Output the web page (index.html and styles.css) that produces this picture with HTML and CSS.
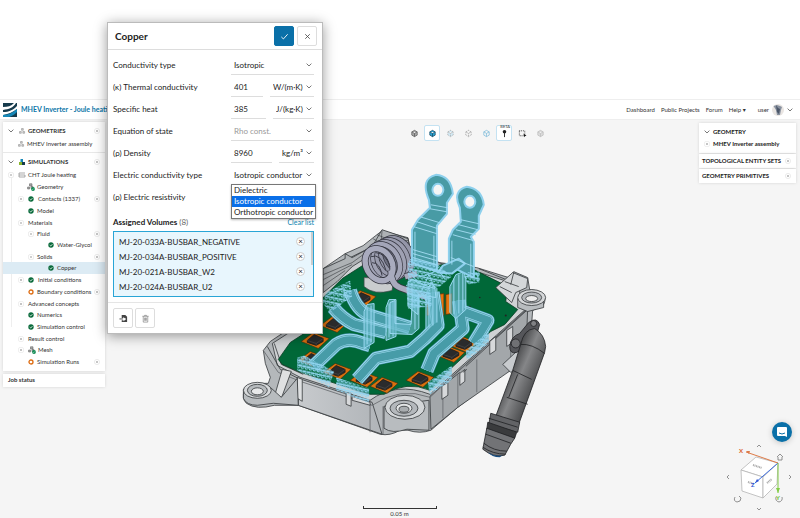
FILE: index.html
```html
<!DOCTYPE html>
<html lang="en">
<head>
<meta charset="utf-8">
<title>MHEV Inverter - Joule heating</title>
<link rel="stylesheet" href="styles.css">
</head>
<body>
<svg class="defs" aria-hidden="true">
  <symbol id="chev" viewBox="0 0 6 4"><path d="M.6.6 3 3 5.400.6" fill="none" stroke="currentColor" stroke-width=".8"/></symbol>
  <symbol id="plus" viewBox="0 0 6 6"><circle cx="3" cy="3" r="2.600" fill="#fff" stroke="#ddd" stroke-width=".6"/><path d="M2.200 3h1.600M3 2.200v1.600" stroke="#777" stroke-width=".6"/></symbol>
  <symbol id="minus" viewBox="0 0 6 6"><rect x=".5" y=".5" width="5" height="5" rx="1.500" fill="#fff" stroke="#e2e2e2" stroke-width=".6"/><path d="M2 3h2" stroke="#777" stroke-width=".7"/></symbol>
  <symbol id="box" viewBox="0 0 6 6"><rect x=".5" y=".5" width="5" height="5" rx="1.500" fill="#fff" stroke="#e6e6e6" stroke-width=".6"/><path d="M2.200 3h1.600M3 2.200v1.600" stroke="#777" stroke-width=".6"/></symbol>
  <symbol id="ok" viewBox="0 0 6 6"><circle cx="3" cy="3" r="2.700" fill="#0b6b3c"/><path d="M1.700 3.100 2.700 4 4.400 2.200" fill="none" stroke="#fff" stroke-width=".8"/></symbol>
  <symbol id="ring" viewBox="0 0 6 6"><circle cx="3" cy="3" r="2" fill="#fff" stroke="#dd6b10" stroke-width="1.300"/></symbol>
  <symbol id="geo" viewBox="0 0 8 7"><path d="M3.500 1h1.800v1.800H3.500zM1.500 4h1.800v1.800H1.500zM4.800 4h1.800v1.800H4.800z" fill="#ccc" stroke="#888" stroke-width=".5"/></symbol>
  <symbol id="geook" viewBox="0 0 8 8"><path d="M2.500.8h2.500v2.200H2.500zM.6 4h2v2h-2zM4 3.500h2v2H4z" fill="#aaa" stroke="#666" stroke-width=".6"/><circle cx="6" cy="6" r="1.900" fill="#0b8a50"/><path d="m5.200 6 .6.6 1-1.100" fill="none" stroke="#fff" stroke-width=".5"/></symbol>
  <symbol id="cube" viewBox="0 0 10 10"><path d="M5 1.500 8 3.200v3.600L5 8.500 2 6.800V3.200zM2 3.200 5 4.900 8 3.200M5 4.900v3.600" fill="var(--fill,none)" stroke="currentColor" stroke-width=".8" stroke-dasharray="var(--dash,none)"/></symbol>
</svg>

<header class="topbar">
  <svg class="logo" viewBox="0 0 14 14" aria-hidden="true"><path d="M0 0h14v14H0z" fill="#173b4c"/><path d="M0 4C5 4 8 3 11 0h2C10 5 6 6 0 7zM0 9c6 0 10-2 14-6v3C10 9 6 11 0 12z" fill="#fff"/><path d="M0 12C6 12 10 9 14 6v3c-3 3-5 4-8 5H0z" fill="#1688b8"/></svg>
  <h1 class="project">MHEV Inverter - Joule heating</h1>
  <nav class="nav">
    <a href="#">Dashboard</a><a href="#">Public Projects</a><a href="#">Forum</a><a href="#">Help <span class="caret">▾</span></a>
  </nav>
  <button class="user" type="button">user
    <svg class="avatar" viewBox="0 0 12 12" aria-hidden="true"><circle cx="6" cy="6" r="6" fill="#e9e5e2"/><path d="M1.500 2 5 1l3 1 2 1-1 3-1 5H5L4 6z" fill="#8992a0"/><path d="m4 1 2 3 2 1-1 5-2-2z" fill="#4b5669"/></svg>
    <svg class="chev"><use href="#chev"/></svg>
  </button>
</header>

<main class="workspace">
  <svg class="model" viewBox="0 119 800 399" preserveAspectRatio="xMidYMid meet" role="img" aria-label="Inverter assembly">
    <defs>
      <linearGradient id="pipe" gradientUnits="userSpaceOnUse" x1="507" y1="376" x2="535" y2="388"><stop offset="0" stop-color="#4c4d4f"/><stop offset=".4" stop-color="#858688"/><stop offset="1" stop-color="#4a4b4d"/></linearGradient>
      <linearGradient id="wall" x1="0" x2="1"><stop offset="0" stop-color="#c7cacd"/><stop offset="1" stop-color="#b0b4b8"/></linearGradient>
      <g id="chip"><path d="M-14 2-2-7 14-1 3 9z" fill="#d9700f" stroke="#3b2a10" stroke-width=".6"/><path d="M-8 1-1-5 8-1V2L1 6-8 3z" fill="#2a2b2c" stroke="#111" stroke-width=".6"/><path d="M-8 1 1 4 8-1M1 4v2" fill="none" stroke="#555" stroke-width=".5"/></g>
      <pattern id="pins" width="4" height="5" patternUnits="userSpaceOnUse" patternTransform="skewY(12)"><path d="M.8 0v3q1.200 2 2.400 0V0M0 1.500h4" fill="none" stroke="#93d6f2" stroke-width=".9"/></pattern>
      <path id="bars" d="M313 366 336 344Q348 336 363 343L370 345M357 379 376 358 410 351 425 338 438 325 433 292M427 370 434 353 463 328 459 300M333 307Q342 318 354 324L386 332M350 290Q356 310 370 315L410 327M463 311 488 320 474 343"/>
      <ellipse id="turn" rx="15" ry="19.500" transform="rotate(-28)"/>
    </defs>

    <g stroke="#34373a" stroke-width=".8" stroke-linejoin="round">
      <!-- housing body -->
      <path fill="#b4b8bb" d="M263 350 270 341 285 331 300 300 323 268 345 253 363 245 373 237 382 230 408 237 411 252 440 262 477 267 509 277 514 271 528 277 530 289Q550 291 544 304L533 310 531 336 526 362 511 370 503 373 458 407 431 430Q420 434 408 430L400 430Q390 436 380 434L298 405 274 405Q256 410 246 403 241 398 244 390 250 382 268 383L270 377 265 363z"/>
      <path fill="url(#wall)" d="M298 378 372 402 382 434 298 405z"/>
      <path fill="#a3a7aa" d="M430 396 528 308 526 360 511 370 458 407 431 429z"/>
      <path fill="none" stroke="#62666a" d="M263 350 278 372 300 381 372 405 Q400 386 430 397L528 308M458 374v33M477 359v33M511 328v42M298 378v27M370 404v28M383 406v28M410 406v24M443 388v30"/>
      <path fill="#cfd2d4" d="M272 343 286 334 310 318 323 290 350 264 380 243 420 258 477 271 508 281 520 288 520 300 529 306 430 394Q396 381 370 400L300 377 277 365z"/>
      <path fill="none" d="M267 346 280 369 300 379M274 343 281 364 303 374M479 268 509 280 527 283M323 272 350 257 366 249M323 280 351 261 368 254M323 286 352 266"/>
      <path fill="#aeb2b5" d="M323 268 345 258 345 253 352 257 372 246 382 229 391 232 408 238 411 252 392 246 376 251 352 266 337 281 323 292z"/>
      <path fill="none" stroke-width=".6" d="M323 274 352 262 374 246M323 279 352 264M323 285 345 270M373 238l10 6 26-2M377 234l12 5 20 1M382 230l-1 12"/>
      <!-- printed board -->
      <path fill="#006838" stroke="#063b21" d="M278 359 290 342 304 333 318 302 342 278 367 262 430 266 459 261 478 271 508 286 506 301 518 309 505 324 491 331 449 370 430 390Q407 380 384 394L370 394 300 372 282 364z"/>
      <!-- housing details -->
      <path fill="#dfe1e2" d="M282 369 291 371 281 398 273 400zM297 377l5 2v22l-5-3z"/>
      <path fill="#d7d9db" d="m346 392 5 1v13l-5-2zM352 396l18 6v3l-18-5zM490 341l6-5v14l-6 4zM460 373l5-4v12l-5 4zM442 386l6-4v13l-6 4zM507 330l6-4v16l-6 4z"/>
      <path fill="#c8cbce" d="m503 364 15-14 6-2-3 20-10 4z"/>
      <path fill="#d4d7d9" d="m496 287 17-15 15 6-1 9-11 5-4 10z"/>
      <path fill="none" d="m505 281 14 5M514 272l-3 12M500 286l12 6M467 369l-4 3M450 380l10-8M466 366l24-22M496 338l32-29"/>
      <!-- mounting lugs -->
      <path fill="#b8bcbf" d="M243 389v9q3 7 14 7l16-2 25 2-1-27-16 19-11-10z"/>
      <ellipse cx="257" cy="390" rx="14" ry="8" fill="#d7d9db"/><ellipse cx="257" cy="390" rx="10" ry="6" fill="#b7bbbe"/><ellipse cx="257" cy="391" rx="6" ry="3.500" fill="#e8e9ea"/>
      <path fill="#b8bcbf" d="M384 406v22q8 6 23 1l22 1V400z"/>
      <ellipse cx="405" cy="407" rx="20" ry="12" fill="#d3d6d8"/><ellipse cx="404" cy="408" rx="14" ry="8" fill="#b4b8bc"/><ellipse cx="404" cy="408" rx="8" ry="5" fill="#e3e5e6"/><ellipse cx="404" cy="409" rx="5" ry="3" fill="#a9adb0"/>
      <path fill="#b8bcbf" d="M518 298v9l10 4 16-4v-10z"/>
      <ellipse cx="532" cy="297" rx="14" ry="8" fill="#d5d7d9"/><ellipse cx="532" cy="297" rx="10" ry="5.500" fill="#b3b7bb"/><ellipse cx="532" cy="298" rx="6" ry="3" fill="#ececec"/>
    </g>

    <!-- power components -->
    <use href="#chip" x="315" y="339"/><use href="#chip" x="334" y="323"/><use href="#chip" x="362" y="297"/>
    <use href="#chip" x="337" y="370"/><use href="#chip" x="364" y="378"/><use href="#chip" x="384" y="384"/>
    <use href="#chip" x="420" y="378"/><use href="#chip" x="451" y="353"/><use href="#chip" x="312" y="358"/><use href="#chip" x="464" y="343"/>
    <path d="m436 294 8-1v22l-7 2zM446 294l6-1v20l-6 1zM427 296l7-2v20l-7 1z" fill="#e8740d" stroke="#5b2e06" stroke-width=".7"/>
    <g fill="#222"><circle cx="506" cy="315" r="1"/><circle cx="480" cy="297" r=".8"/><circle cx="470" cy="306" r=".8"/></g>

    <!-- coil -->
    <path d="M364 277v9q10 9 28 4l2-12z" fill="#c9ccce" stroke="#44474a" stroke-width=".7"/>
    <g fill="#6d6f7f" stroke="#34353f" stroke-width="6"><use href="#turn" x="396" y="256"/></g>
    <g fill="none">
      <use href="#turn" x="396" y="256" stroke="#9496a8" stroke-width="4.600"/>
      <use href="#turn" x="392" y="258" stroke="#34353f" stroke-width="6"/><use href="#turn" x="392" y="258" stroke="#9a9cae" stroke-width="4.600"/>
      <use href="#turn" x="388" y="260" stroke="#34353f" stroke-width="6"/><use href="#turn" x="388" y="260" stroke="#9fa1b3" stroke-width="4.600"/>
      <use href="#turn" x="384" y="262" stroke="#34353f" stroke-width="6"/><use href="#turn" x="384" y="262" stroke="#a3a5b8" stroke-width="4.600"/>
      <g stroke="#34353f" stroke-width="7"><ellipse cx="379" cy="264" rx="13" ry="17" transform="rotate(-28 379 264)"/><path d="M391 270q0 14 9 17l28 10M405 276l12-3"/></g>
      <g stroke="#a9abbe" stroke-width="5.500"><ellipse cx="379" cy="264" rx="13" ry="17" transform="rotate(-28 379 264)"/><path d="M391 270q0 14 9 17l28 10M405 276l12-3"/></g>
      <path d="M371 256q10-4 15 14M372 262q8 0 10 13M376 252q10 1 14 14" stroke="#3b3c48" stroke-width="1"/>
    </g>

    <!-- flat busbars -->
    <g fill="none" stroke-linejoin="round">
      <use href="#bars" stroke="#3f8ea5" stroke-width="14"/>
      <use href="#bars" stroke="#9ddaf2" stroke-width="13"/>
      <use href="#bars" stroke="#5fabb9" stroke-width="11"/>
      <use href="#bars" stroke="#9ddaf2" stroke-width="9"/>
      <use href="#bars" stroke="#479ca8" stroke-width="8"/>
    </g>
    <!-- upright tabs -->
    <g fill="#67b9c9" fill-opacity=".65" stroke="#9bd9f2" stroke-width="1">
      <path d="M364 311 367 304 374 303V342L364 348zM367 307v37M371 305v37M386 307 389 299 396 299V336L386 340zM389 303v34M393 301v35"/>
      <path d="M390 302V333L412 334 419 328V294L413 289 411 324 395 323V300zM415 292v37"/>
      <path d="M426 328V294L431 282 437 288V322M429 291v36M433 285v40M450 312V286L456 274 464 271 466 278V309L456 318zM454 278v36M459 274v39M463 272v39"/>
      <path d="M408 306V281L413 279 420 283 435 288 436 297 418 294V314zM412 282v28"/>
    </g>
    <!-- standing terminals -->
    <g stroke="#8dd0ed" stroke-width="2" stroke-linejoin="round" fill="#489ba5">
      <path d="M429 199Q420 178 436 174 451 175 453 193L447 202V213L437 225V271L412 262V229L418 219 430 207z"/>
      <path d="M460 207Q452 190 467 186 482 188 484 204L479 215V228L471 236 474 241V277L449 265V238L453 229 461 221z"/>
      <path d="M443 265 459 258 465 263 452 273 438 272z"/>
      <ellipse cx="438" cy="189" rx="5.500" ry="6" fill="#f5f5f5"/><ellipse cx="470" cy="201" rx="5.500" ry="6" fill="#f5f5f5"/>
    </g>
    <path d="M431 204l17 3M430 208l17 3M420 216l20 6M417 221l21 7M414 226l23 7M461 219l18 4M459 224l19 5M456 229l20 5M453 234l21 6M413 249l24 7M413 253l24 7M413 257l24 7M451 257l23 9M415 231v30M434 235v31M452 240v24M471 243v31" fill="none" stroke="#a5def4" stroke-width=".9"/>
    <!-- contact pins -->
    <g fill="#59a9bb" fill-opacity=".5">
      <path d="M297 358 304 356 333 371 332 377 297 364zM337 378 369 390V396L337 384zM428 384 452 366V374L429 392zM466 351 489 332V340L467 358z"/>
    </g>
    <g fill="url(#pins)">
      <path d="M297 357 304 355 334 371 329 387 297 370zM336 377 369 388V403L336 390zM428 382 452 365V380L430 394zM466 350 489 331V343L467 360zM408 262 412 256 438 264 452 276 440 286 420 288 408 300zM322 302 326 292 350 280 352 296 330 312zM464 276 480 270V282L468 284zM406 284 430 286 432 306 408 308z"/>
    </g>
    <g fill="none" stroke="#8fd4f0" stroke-width="1"><path d="M412 270q8 9 18 3t15 6M412 275q12 14 20 7M421 292l8-18 6 14M468 272l10 2v7M326 295l18-8v12M408 292l11 5v10M413 301l10-8 4 9"/></g>

    <!-- hose connector -->
    <g stroke="#202123" stroke-width=".8" stroke-linejoin="round">
      <path d="M510 346Q511 336 520 333L529 322Q537 316 540 324L538 331 522 349 517 352Q510 354 510 346z" fill="#55565a"/>
      <circle cx="516" cy="343" r="4.500" fill="#707174"/><circle cx="534" cy="323" r="3" fill="#808184"/>
      <path fill="url(#pipe)" d="M521 344Q524 329 535 328 545 334 546 346L545 352 519 424 496 416 513 370z"/>
      <path fill="none" d="M521 344Q532 343 545 353M513 370 532 379M507 397 528 404M518 374l-9 23"/>
      <path fill="#626366" d="m491 413 29 9-2 10-29-8z"/><path fill="#3a3b3d" d="m488 422 29 10-2 6-28-9z"/>
      <path fill="#727376" d="m487 428 28 10-4 6-6 11q-11 3-22-6z"/>
      <path fill="none" d="m489 418 29 9M486 434l25 9M484 443q10 8 23 8M483 447q10 7 23 7"/>
      <path fill="#174e83" stroke="none" d="M488 452q8 5 15 3l-3 2q-8 0-12-5z"/>
    </g>
  </svg>

  <aside class="sidebar">
    <section class="tree card" aria-label="Simulation tree">
      <div class="section">
        <h2 class="head"><svg class="chev"><use href="#chev"/></svg><svg class="ico"><use href="#geo"/></svg>GEOMETRIES<svg class="dot end"><use href="#plus"/></svg></h2>
        <p class="row lone"><svg class="ico"><use href="#geo"/></svg>MHEV Inverter assembly</p>
      </div>
      <h2 class="head"><svg class="chev"><use href="#chev"/></svg><svg class="ico" viewBox="0 0 8 8"><path d="M2.500 1h2.500v3H2.500z" fill="#1688b8"/><path d="M1 4h3v3H1z" fill="#8ab52c"/><path d="M4 4h3v3H4z" fill="#173b4c"/></svg>SIMULATIONS<svg class="dot end"><use href="#plus"/></svg></h2>
      <ul class="items">
        <li class="row l0"><svg class="dot"><use href="#minus"/></svg><svg class="ico" viewBox="0 0 8 7"><path d="M1 1.500h6M1 3.500h6M1 5.500h6M1 1.500v4M7 3.500v2" fill="none" stroke="#888" stroke-width=".7"/></svg>CHT Joule heating</li>
        <li class="row l1"><svg class="ico"><use href="#geook"/></svg>Geometry</li>
        <li class="row l1 box"><svg class="dot"><use href="#box"/></svg><svg class="dot"><use href="#ok"/></svg>Contacts (1337)<svg class="dot end"><use href="#plus"/></svg></li>
        <li class="row l2"><svg class="dot"><use href="#ok"/></svg>Model</li>
        <li class="row group l1 box"><svg class="dot"><use href="#minus"/></svg>Materials</li>
        <li class="row group l2"><svg class="dot"><use href="#minus"/></svg>Fluid<svg class="dot end"><use href="#plus"/></svg></li>
        <li class="row l3"><svg class="dot"><use href="#ok"/></svg>Water-Glycol</li>
        <li class="row group l2"><svg class="dot"><use href="#minus"/></svg>Solids<svg class="dot end"><use href="#plus"/></svg></li>
        <li class="row l3 current"><svg class="dot"><use href="#ok"/></svg>Copper</li>
        <li class="row l1 box"><svg class="dot"><use href="#box"/></svg><svg class="dot"><use href="#ok"/></svg>Initial conditions</li>
        <li class="row l2"><svg class="dot"><use href="#ring"/></svg>Boundary conditions<svg class="dot end"><use href="#plus"/></svg></li>
        <li class="row group l1 box"><svg class="dot"><use href="#box"/></svg>Advanced concepts</li>
        <li class="row l2"><svg class="dot"><use href="#ok"/></svg>Numerics</li>
        <li class="row l2"><svg class="dot"><use href="#ok"/></svg>Simulation control</li>
        <li class="row group l1 box"><svg class="dot"><use href="#box"/></svg>Result control</li>
        <li class="row l1 box"><svg class="dot"><use href="#box"/></svg><svg class="ico mesh"><use href="#geook"/></svg>Mesh</li>
        <li class="row l2"><svg class="dot"><use href="#ring"/></svg>Simulation Runs<svg class="dot end"><use href="#plus"/></svg></li>
      </ul>
    </section>
    <section class="card job"><h2>Job status</h2></section>
  </aside>

  <div class="toolbar" role="toolbar" aria-label="View tools">
    <button type="button" aria-label="Solid"><svg class="t-solid"><use href="#cube"/></svg></button>
    <button type="button" class="on" aria-label="Volumes"><svg class="t-vol"><use href="#cube"/></svg></button>
    <button type="button" aria-label="Faces"><svg class="t-face"><use href="#cube"/></svg></button>
    <button type="button" aria-label="Edges"><svg class="t-edge"><use href="#cube"/></svg></button>
    <button type="button" aria-label="Nodes"><svg class="t-node"><use href="#cube"/></svg></button>
    <button type="button" class="on beta"><span>BETA</span><svg viewBox="0 0 10 10" aria-hidden="true"><circle cx="5" cy="3" r="2" fill="#222"/><path d="M5 3v6" stroke="#222"/></svg></button>
    <button type="button" aria-label="Box select"><svg viewBox="0 0 10 10"><path d="M1.500 2h6v5.500h-6z" fill="none" stroke="#333" stroke-dasharray="1 1"/><path d="m6 5 3.500 2.500-1.500.3-.8 1.500z" fill="#111"/></svg></button>
    <button type="button" aria-label="Hide"><svg class="t-hide"><use href="#cube"/></svg></button>
  </div>

  <aside class="scene">
    <section class="card geo-card">
      <h2 class="head"><svg class="chev"><use href="#chev"/></svg>GEOMETRY</h2>
      <p class="part"><svg class="dot"><use href="#box"/></svg>MHEV Inverter assembly</p>
    </section>
    <section class="card"><h2 class="bar">TOPOLOGICAL ENTITY SETS<svg class="dot"><use href="#plus"/></svg></h2></section>
    <section class="card"><h2 class="bar">GEOMETRY PRIMITIVES<svg class="dot"><use href="#plus"/></svg></h2></section>
  </aside>

  <div class="scale"><span class="rule"></span>0.05 m</div>

  <div class="corner">
    <button class="chat" type="button" aria-label="Open chat"><svg viewBox="0 0 20 20"><path d="M6 5h8q1 0 1 1v9l-2-1H6q-1 0-1-1V6q0-1 1-1z" fill="#fff"/><path d="M7 11q3 2 6 0" fill="none" stroke="#0a70a8"/></svg></button>
    <svg class="viewcube" viewBox="724 442 72 64" aria-hidden="true">
      <g fill="#fff" stroke="#b5b5b5" stroke-width=".8"><path d="m741 470 15-13 22 6-15 14z"/><path d="m741 470 22 7v21l-21-7z"/><path d="m763 477 15-14-1 21-14 14z"/></g>
      <g fill="none" stroke="#777" stroke-width=".8"><path d="m757 447 2-2 2 2M729 475l-2 2 2 2M789 475l2 2-2 2M777 457l3-3 3 3M778 457v3h4v-3M735 497q-2 4 2 5 4 0 4-4l-2-2M776 497q-1 4 3 5 4-1 3-5M757 508l2 2 2-2"/></g>
      <g fill="none"><path d="m778 463-32-11" stroke="#dd7b48"/><path d="m778 463-23 20" stroke="#3f6fe0"/><path d="M778 463v30" stroke="#83cc47"/></g>
      <path d="m746 451 4 0-1 3z" fill="#dd7b48"/><path d="m755 483 4-2-2-2z" fill="#3056d3"/><path d="m776 488 4 0-2 5z" fill="#83cc47"/>
      <path d="m753 465 9 3M767 483l5-4M748 482l6 2" stroke="#aaa" stroke-width="2" stroke-dasharray="1 .6"/>
      <text x="739" y="453" fill="#d9602a">X</text><text x="751" y="487" fill="#3056d3">Z</text><text x="776" y="500" fill="#6abf2e">Y</text>
    </svg>
  </div>
</main>

<form class="dialog" aria-labelledby="dlg-title">
  <header class="dlg-head">
    <h2 id="dlg-title">Copper</h2>
    <button type="submit" class="btn primary" aria-label="Apply"><svg viewBox="0 0 10 10"><path d="m1.500 5.500 2.300 2.200L8.500 2.500" fill="none" stroke="#fff"/></svg></button>
    <button type="button" class="btn" aria-label="Close"><svg viewBox="0 0 10 10"><path d="m2.500 2.500 5 5m0-5-5 5" stroke="#444" stroke-width=".9"/></svg></button>
  </header>
  <div class="fields">
    <div class="field"><label for="ctype">Conductivity type</label><div class="ctl"><span class="pick wide"><select id="ctype"><option>Isotropic</option></select><svg class="chev"><use href="#chev"/></svg></span></div></div>
    <div class="field"><label for="tc">(κ) Thermal conductivity</label><div class="ctl"><input id="tc" value="401"><span class="pick"><select aria-label="Thermal conductivity unit"><option>W/(m·K)</option></select><svg class="chev"><use href="#chev"/></svg></span></div></div>
    <div class="field"><label for="sh">Specific heat</label><div class="ctl"><input id="sh" value="385"><span class="pick"><select aria-label="Specific heat unit"><option>J/(kg·K)</option></select><svg class="chev"><use href="#chev"/></svg></span></div></div>
    <div class="field"><label for="eos">Equation of state</label><div class="ctl"><span class="pick wide muted"><select id="eos"><option>Rho const.</option></select><svg class="chev"><use href="#chev"/></svg></span></div></div>
    <div class="field"><label for="den">(ρ) Density</label><div class="ctl"><input id="den" value="8960"><span class="pick"><select aria-label="Density unit"><option>kg/m³</option></select><svg class="chev"><use href="#chev"/></svg></span></div></div>
    <div class="field"><label for="ect">Electric conductivity type</label><div class="ctl"><span class="pick wide"><select id="ect"><option>Isotropic conductor</option></select><svg class="chev"><use href="#chev"/></svg></span>
      <ul class="menu" role="listbox" aria-label="Electric conductivity type"><li role="option">Dielectric</li><li role="option" aria-selected="true">Isotropic conductor</li><li role="option">Orthotropic conductor</li></ul></div></div>
    <div class="field"><span>(ρ) Electric resistivity</span></div>
  </div>
  <div class="assigned"><h3>Assigned Volumes <span>(8)</span></h3><a href="#">Clear list</a></div>
  <ul class="volumes">
    <li>MJ-20-033A-BUSBAR_NEGATIVE<button type="button" aria-label="Remove">×</button></li>
    <li>MJ-20-034A-BUSBAR_POSITIVE<button type="button" aria-label="Remove">×</button></li>
    <li>MJ-20-021A-BUSBAR_W2<button type="button" aria-label="Remove">×</button></li>
    <li>MJ-20-024A-BUSBAR_U2<button type="button" aria-label="Remove">×</button></li>
  </ul>
  <footer class="dlg-foot">
    <button type="button" class="btn" aria-label="Import"><svg viewBox="0 0 10 10"><path d="M3 1h4l2 2v6H3V7h2v1l3-2.500L5 3v1.500H3z" fill="#444"/><path d="M.5 5.500h4M6 2v2h2" stroke="#444" fill="none"/></svg></button>
    <button type="button" class="btn" aria-label="Delete"><svg viewBox="0 0 10 10"><path d="M1.500 2.500h7M4 2.500v-1h2v1M2.500 2.500V9h5V2.500M4 4v3.500M5 4v3.500M6 4v3.500" fill="none" stroke="#777" stroke-width=".7"/></svg></button>
  </footer>
</form>
</body>
</html>
```
FILE: styles.css
```css
* { box-sizing: border-box; }
body {
  margin: 0;
  min-height: 100vh;
  padding-top: 99px;
  display: flex;
  flex-direction: column;
  position: relative;
  background: #fff;
  color: #333;
  font-family: Lato, "Liberation Sans", sans-serif;
  font-size: 6px;
  line-height: 1;
}
h1, h2, h3, p, ul { margin: 0; padding: 0; font-size: inherit; }
ul { list-style: none; }
a { color: inherit; text-decoration: none; }
button, input, select { font: inherit; color: inherit; margin: 0; padding: 0; border: 0; background: none; border-radius: 0; outline: 0; }
svg { flex: none; }
.defs { position: absolute; width: 0; height: 0; }

.chev { width: 6px; height: 4px; color: #555; }
.dot { width: 6px; height: 6px; }
.ico { width: 8px; height: 8px; }
.card { background: #fff; box-shadow: 0 0 3px #0002; }

/* top bar */
.topbar { display: flex; align-items: center; height: 21px; padding: 0 7px 0 3px; border-top: 1px solid #eee; border-bottom: 1px solid #eee; }
.logo { width: 14px; height: 14px; margin-right: 4px; }
.project { flex: 1; color: #0c76a8; font-size: 7px; }
.nav { display: flex; gap: 6px; }
.caret { font-family: "DejaVu Sans", sans-serif; }
.user { display: flex; align-items: center; gap: 3px; margin-left: 12px; }
.avatar { width: 12px; height: 12px; }

/* workspace */
.workspace {
  flex: 1;
  position: relative;
  display: grid;
  grid-template-columns: 102px 1fr 97px;
  grid-template-rows: 1fr auto;
  padding: 2px 4px 1px 3px;
  background: #f5f5f5;
}
.model { position: absolute; inset: 0; width: 100%; height: 100%; }
.sidebar, .scene, .toolbar, .scale { position: relative; }
.sidebar { display: flex; flex-direction: column; gap: 3px; }
.tree { padding-bottom: 3px; }
.section { border-bottom: 1px solid #e8e8e8; padding-bottom: 2px; }
.head { display: flex; align-items: center; height: 16px; padding: 2px 5px 0; gap: 2px; font-weight: 700; }
.head .ico { margin-left: 2px; }
.row { display: flex; align-items: center; height: 12px; gap: 4px; padding: 0 5px 0 0; white-space: nowrap; }
.head .end, .row .end { margin-left: auto; }
.group { height: 11px; }
.row.lone { padding-left: 14px; gap: 2px; }
.items { background: linear-gradient(#eee, #eee) 8px 8px / 1px 150px no-repeat; }
.l0 { padding-left: 5px; }
.l0 .ico { margin-right: -2px; }
.l1 { padding-left: 24px; gap: 2px; }
.l1.box { padding-left: 15px; gap: 4px; }
.l2 { padding-left: 25px; gap: 3px; }
.l3 { padding-left: 45px; gap: 3px; }
.current { background: #dcebf4; }
.mesh { margin-right: -2px; }
.job { padding: 3px 5px 4px; }

.toolbar { display: flex; justify-content: center; align-items: flex-start; gap: 2px; padding: 3px 0 0 150px; }
.toolbar button { display: flex; flex-direction: column; align-items: center; justify-content: center; width: 16px; height: 16px; border: 1px solid transparent; border-radius: 2px; }
.toolbar svg { width: 9px; height: 9px; }
.toolbar .on { background: #fff; border-color: #c4e2f2; }
.toolbar .beta { position: relative; }
.beta span { position: absolute; top: -1px; right: 1px; font-size: 4px; }
.t-solid { color: #555; --fill: #aaa; }
.t-vol { color: #12465e; --fill: #2ba6d8; }
.t-face { color: #999; --dash: 1 1; --fill: #d5ecf7; }
.t-edge { color: #888; --dash: 1 1; }
.t-node { color: #7bb9da; }
.t-hide { color: #bbb; --fill: #ddd; }

.scene { display: flex; flex-direction: column; gap: 1px; padding-top: 1px; color: #222; }
.scene .chev { margin-right: 1px; }
.geo-card { height: 30px; }
.geo-card .head { height: 15px; }
.part { display: flex; align-items: center; gap: 3px; height: 12px; padding-left: 5px; font-weight: 700; }
.bar { display: flex; align-items: center; justify-content: space-between; height: 14px; padding: 0 5px 0 3px; }

.scale { grid-column: 1 / -1; grid-row: 2; display: flex; flex-direction: column; align-items: center; gap: 2px; }
.rule { width: 74px; height: 3px; border: solid #333; border-width: 0 1px 1px; }

.corner { position: absolute; right: 4px; bottom: 12px; display: flex; flex-direction: column; align-items: flex-end; }
.chat { width: 20px; height: 20px; margin-right: 4px; border-radius: 50%; background: #0a70a8; box-shadow: 0 1px 6px #0003; }
.chat svg { display: block; width: 20px; height: 20px; }
.viewcube { width: 72px; height: 64px; overflow: visible; }
.viewcube text { font-size: 6px; font-weight: 700; }

/* material dialog */
.dialog {
  position: absolute;
  left: 107px;
  top: 22px;
  width: 216px;
  background: #fff;
  border: 1px solid #bbb;
  box-shadow: 0 2px 12px #0006;
  font-size: 8px;
  color: #222;
}
.dlg-head { display: flex; align-items: center; gap: 3px; height: 27px; padding: 0 5px 0 7px; border-bottom: 1px solid #ddd; }
.dlg-head h2 { flex: 1; font-size: 10px; }
.btn { display: grid; place-items: center; width: 20px; height: 20px; border: 1px solid #ddd; border-radius: 2px; background: #fff; }
.btn.primary { background: #0a70a8; border-color: #0a70a8; }
.btn svg { width: 9px; height: 9px; }
.fields { padding: 4px 8px 0 5px; }
.field { display: flex; align-items: center; justify-content: space-between; height: 22px; }
.ctl { position: relative; display: flex; gap: 7px; width: 83px; }
.ctl input { flex: 1; min-width: 0; height: 20px; padding-left: 3px; border-bottom: 1px solid #ddd; }
.pick { position: relative; display: flex; }
.pick.wide { flex: 1; }
.pick select { appearance: none; width: 100%; height: 20px; padding: 0 11px 0 3px; border-bottom: 1px solid #ddd; }
.pick .chev { position: absolute; right: 2px; top: 8px; pointer-events: none; }
.muted { color: #999; }
.menu { position: absolute; z-index: 1; top: 19px; left: 0; border: 1px solid #777; background: #fff; box-shadow: 0 1px 2px #0004; white-space: nowrap; }
.menu li { height: 11px; padding: 1px 2px 2px; }
.menu [aria-selected] { background: #0a6fe8; color: #fff; }
.assigned { display: flex; align-items: flex-end; justify-content: space-between; height: 23px; padding: 0 8px 5px 5px; }
.assigned h3 { font-weight: 700; }
.assigned span { font-weight: 400; color: #666; }
.assigned a { color: #0b84b0; font-size: 7px; }
.volumes { margin: 0 8px 5px 5px; padding: 2px 8px 2px 5px; border: 1px solid #29a5d6; background: linear-gradient(#ccc, #ccc) right top / 2px 33px no-repeat #e8f6fd; }
.volumes li { display: flex; align-items: center; justify-content: space-between; height: 15px; }
.volumes button { width: 9px; height: 9px; border: 1px solid #ccc; border-radius: 50%; background: #fff; line-height: 7px; }
.dlg-foot { display: flex; gap: 2px; padding: 5px; border-top: 1px solid #e5e5e5; }
```
